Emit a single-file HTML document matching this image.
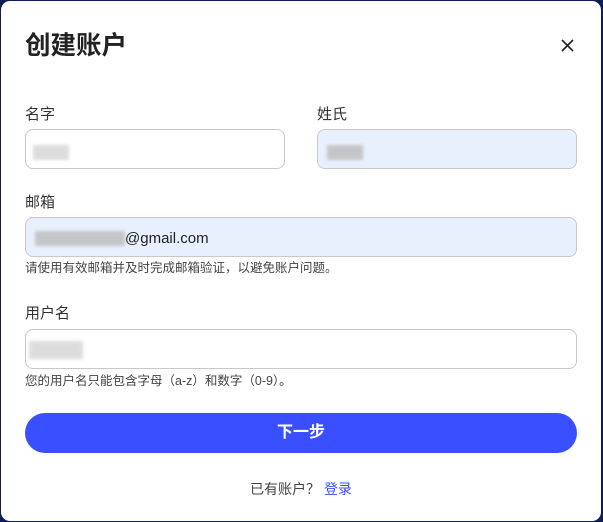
<!DOCTYPE html>
<html><head><meta charset="utf-8"><style>
*{box-sizing:border-box;margin:0;padding:0}
html,body{width:603px;height:522px;overflow:hidden;background:#0f1f55;font-family:"Liberation Sans","Noto Sans CJK SC",sans-serif;color:#222}
.card{position:absolute;left:1px;top:1px;width:600px;height:520px;background:#fff;border-radius:9px}
.abs{position:absolute}
h1{position:absolute;left:24px;top:29px;font-size:25.5px;font-weight:bold;color:#222;line-height:32px}
.lbl{font-size:15px;color:#333;line-height:20px}
.in{border:1px solid #c8c8c8;border-radius:8px;height:40px}
.blue{background:#e9f0fd}
.hint{font-size:12.5px;color:#444;line-height:16px}
.blur{position:absolute;background:#bbb;filter:blur(1.5px);opacity:.8}
</style></head><body>
<div class="card">
<h1>创建账户</h1>
<svg class="abs" style="left:560px;top:38px" width="13" height="13" viewBox="0 0 13 13"><path d="M1 1L12 12M12 1L1 12" stroke="#222" stroke-width="1.6"/></svg>
<div class="abs lbl" style="left:24px;top:104px">名字</div>
<div class="abs lbl" style="left:316px;top:104px">姓氏</div>
<div class="abs in" style="left:24px;top:128px;width:260px"></div>
<div class="blur" style="left:32px;top:144px;width:36px;height:15px;opacity:.5"></div>
<div class="abs in blue" style="left:316px;top:128px;width:260px"></div>
<div class="blur" style="left:326px;top:144px;width:36px;height:15px"></div>
<div class="abs lbl" style="left:24px;top:192px">邮箱</div>
<div class="abs in blue" style="left:24px;top:216px;width:552px"></div>
<div class="blur" style="left:34px;top:230px;width:90px;height:15px"></div>
<div class="abs" style="left:124px;top:228px;font-size:15px;color:#222;line-height:20px">@gmail.com</div>
<div class="abs hint" style="left:24px;top:259px">请使用有效邮箱并及时完成邮箱验证，以避免账户问题。</div>
<div class="abs lbl" style="left:24px;top:303px">用户名</div>
<div class="abs in" style="left:24px;top:328px;width:552px"></div>
<div class="blur" style="left:28px;top:340px;width:54px;height:18px;opacity:.5"></div>
<div class="abs hint" style="left:24px;top:372px">您的用户名只能包含字母（a-z）和数字（0-9）。</div>
<div class="abs" style="left:24px;top:412px;width:552px;height:40px;border-radius:20px;background:#3a4fff;color:#fff;font-size:16px;font-weight:bold;text-align:center;line-height:40px">下一步</div>
<div class="abs" style="left:0;width:600px;top:478px;text-align:center;font-size:14px;color:#444;line-height:20px">已有账户？ <span style="color:#3a4fff">登录</span></div>
</div>
</body></html>
